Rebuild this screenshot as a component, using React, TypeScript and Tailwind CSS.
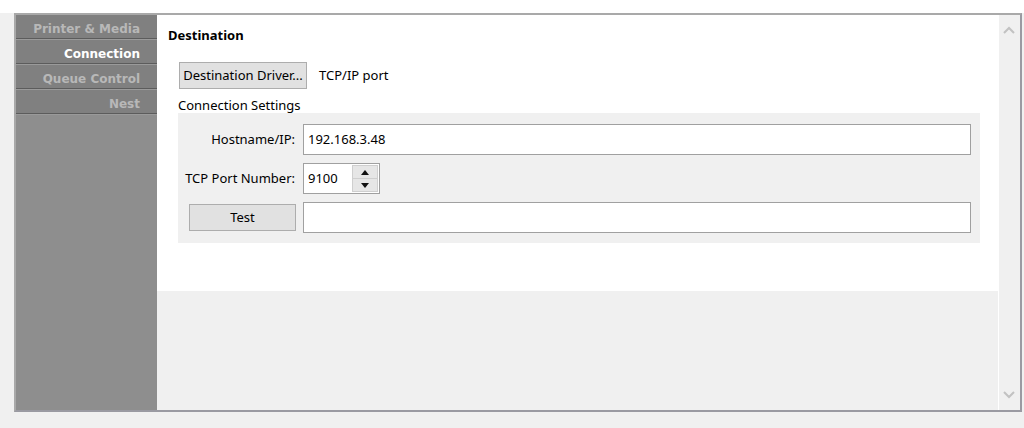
import React from "react";

const ui = { fontFamily: '"Noto Sans", "Open Sans", sans-serif' };
const side = { fontFamily: '"DejaVu Sans", "Liberation Sans", sans-serif' };

function SideItem({ label, active }: { label: string; active?: boolean }) {
  return (
    <div className="h-[25px] flex flex-col bg-[#808080]">
      <div
        className={`flex-1 flex items-center justify-end pr-[17px] pt-[4px] text-[12px] font-bold ${active ? "text-white" : "text-[#b8b8b8]"}`}
        style={side}
      >
        {label}
      </div>
      <div className="h-px bg-[#5c5c5c]" />
      <div className="h-px bg-[#9a9a9a]" />
    </div>
  );
}

function Chevron({ up }: { up?: boolean }) {
  return (
    <svg width="12" height="8" viewBox="0 0 12 8">
      <path
        d={up ? "M1 7 L6 2 L11 7" : "M1 1 L6 6 L11 1"}
        fill="none"
        stroke="#c2c2c2"
        strokeWidth="2"
      />
    </svg>
  );
}

export default function App() {
  return (
    <div className="w-[1024px] h-[428px] bg-[#f0f0f0] flex flex-col" style={ui}>
      <div className="h-[13px] bg-white shrink-0" />
      <div className="ml-[14px] w-[1008px] h-[399px] flex border-t-2 border-l-2 border-[#a9a9a9] border-b-2 border-r-2 border-b-[#9a9aa2] border-r-[#9a9aa2]">
        {/* sidebar */}
        <div className="w-[141px] bg-[#8e8e8e] flex flex-col">
          <SideItem label="Printer & Media" />
          <SideItem label="Connection" active />
          <SideItem label="Queue Control" />
          <SideItem label="Nest" />
        </div>
        {/* content */}
        <div className="flex-1 flex bg-[#f0f0f0]">
          <div className="flex-1 flex flex-col">
            <div className="h-[276px] bg-white pl-[11px] pt-[12px] text-[13px] text-black">
              <div className="text-[13px] font-bold leading-[16px]">Destination</div>
              <div className="flex items-center mt-[19px] ml-[11px]">
                <div className="w-[128px] h-[27px] bg-[#e1e1e1] border border-[#adadad] flex items-center justify-center">
                  Destination Driver...
                </div>
                <div className="ml-[12px]">TCP/IP port</div>
              </div>
              <div className="ml-[10px] mt-[8px] leading-[16px]">Connection Settings</div>
              <div className="ml-[10px] w-[802px] bg-[#f0f0f0] pt-[11px] pb-[10px] pr-[9px] flex flex-col gap-[8px]">
                <div className="flex items-center">
                  <div className="w-[118px] text-right pr-[1px]">Hostname/IP:</div>
                  <div className="ml-[7px] flex-1 h-[31px] bg-white border border-[#a0a0a0] flex items-center pl-[4px]">
                    192.168.3.48
                  </div>
                </div>
                <div className="flex items-center">
                  <div className="w-[118px] text-right pr-[1px]">TCP Port Number:</div>
                  <div className="ml-[7px] w-[77px] h-[31px] bg-white border border-[#a0a0a0] flex items-center pl-[4px]">
                    <div className="flex-1">9100</div>
                    <div className="w-[26px] h-[27px] mr-[1px] flex flex-col border border-[#cfcfcf] bg-[#e6e6e6]">
                      <div className="flex-1 flex items-center justify-center border-b border-[#cfcfcf]">
                        <svg width="8" height="5" viewBox="0 0 8 5"><path d="M0 5 L4 0 L8 5 Z" fill="#111" /></svg>
                      </div>
                      <div className="flex-1 flex items-center justify-center">
                        <svg width="8" height="5" viewBox="0 0 8 5"><path d="M0 0 L4 5 L8 0 Z" fill="#111" /></svg>
                      </div>
                    </div>
                  </div>
                </div>
                <div className="flex items-center">
                  <div className="w-[118px] flex justify-end">
                    <div className="w-[107px] h-[27px] bg-[#e1e1e1] border border-[#adadad] flex items-center justify-center">
                      Test
                    </div>
                  </div>
                  <div className="ml-[7px] flex-1 h-[31px] bg-white border border-[#a0a0a0]" />
                </div>
              </div>
            </div>
            <div className="flex-1" />
          </div>
          {/* scrollbar */}
          <div className="w-[21px] bg-[#f0f0f0] border-l border-white flex flex-col items-center justify-between py-[11px] mr-[1px]">
            <Chevron up />
            <Chevron />
          </div>
        </div>
      </div>
    </div>
  );
}
